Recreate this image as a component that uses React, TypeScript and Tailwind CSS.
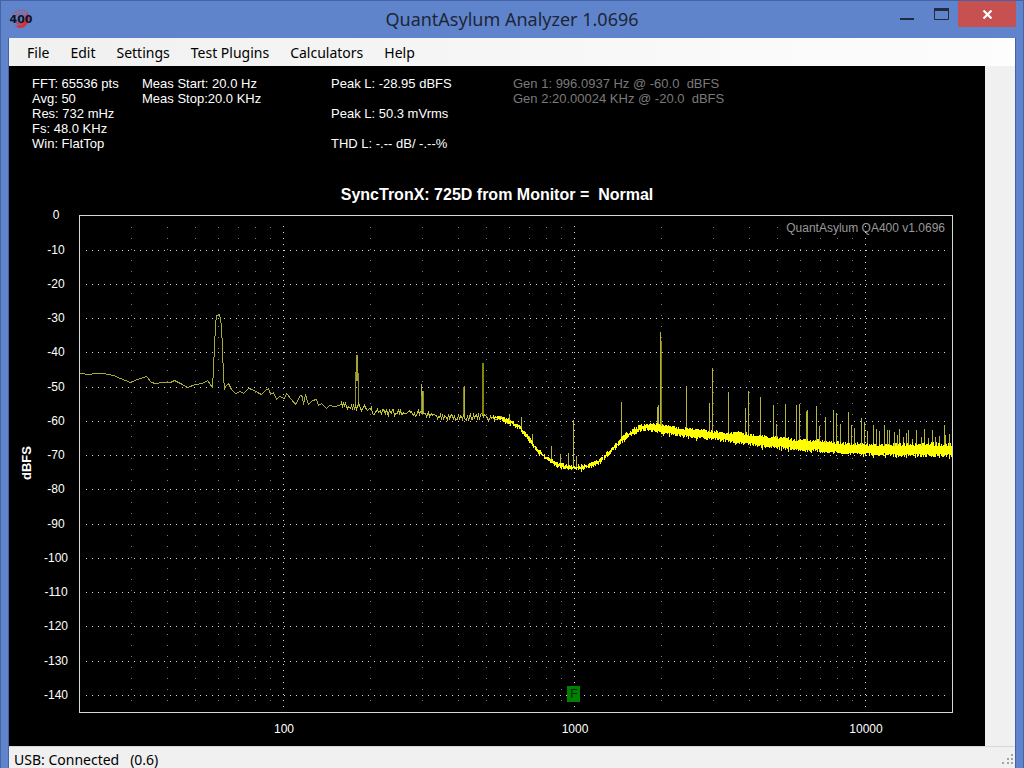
import React from 'react';

const menuItems = ['File', 'Edit', 'Settings', 'Test Plugins', 'Calculators', 'Help'];

// Chart geometry, in view box units
const LEFT = 70;
const RIGHT = 943;
const TOP = 9;
const BOTTOM = 506;
const DECADE = 291;

const levels = [0, -10, -20, -30, -40, -50, -60, -70, -80, -90, -100, -110, -120, -130, -140];
const decades = [100, 1000, 10000];

const freqX = (hz: number) => Math.floor(274.4 + DECADE * Math.log10(hz / 100));
const levelY = (db: number) => Math.floor(9.9 - 3.424 * db);

const minorFreqs: number[] = [];
[10, 100, 1000, 10000].forEach((d) => {
  for (let k = 2; k < 10; k++) {
    const hz = d * k;
    if (hz > 20 && hz < 20000) minorFreqs.push(hz);
  }
});

// Low frequencies: every bin is visible
const lowTrace: [number, number][] = [
  [71, 167], [79, 168], [86, 167], [94, 167], [104, 169], [111, 172], [121, 176], [128, 173],
  [137, 170], [142, 176], [146, 177], [154, 176], [161, 176], [165, 174], [171, 177], [178, 181],
  [186, 178], [193, 177], [198, 174], [203, 181], [204, 162], [206, 119], [207, 109], [210, 108],
  [212, 119], [213, 144], [214, 169], [215, 183], [216, 180], [219, 177], [222, 183], [226, 187],
  [231, 185], [234, 187], [239, 182], [243, 183], [248, 186], [252, 188], [256, 184], [259, 182],
  [261, 188], [264, 186], [267, 193], [270, 190], [275, 192], [277, 187], [282, 193], [286, 198],
  [291, 189], [293, 190], [294, 198], [296, 188], [299, 198], [303, 194], [307, 193], [309, 199],
  [312, 197], [317, 202], [320, 199], [325, 200], [331, 199],
];

// Above that: mean level and spread of the noise floor
const floorPoints: [number, number, number][] = [
  [331, 199, 2], [346, 200, 2], [356, 201, 2], [367, 206, 2], [396, 206, 2], [416, 208, 2],
  [431, 210, 2], [456, 211, 2], [476, 210, 2], [490, 212, 2], [501, 216, 3], [511, 222, 3],
  [519, 232, 3], [528, 245, 3], [538, 253, 3], [546, 258, 3], [556, 261, 3], [567, 262, 3],
  [578, 260, 3], [588, 257, 3], [594, 252, 3], [601, 246, 3], [611, 235, 4], [621, 227, 4],
  [631, 222, 4], [641, 221, 4], [656, 223, 4], [671, 226, 4], [691, 228, 4], [711, 230, 4],
  [731, 232, 5], [751, 235, 5], [771, 237, 5], [791, 239, 5], [811, 240, 5], [831, 242, 5],
  [851, 243, 5], [871, 244, 5], [891, 244, 6], [943, 244, 6],
];

const spikes: [number, number][] = [
  [412, 178], [413, 185], [455, 180], [500, 208], [512, 211], [523, 228], [542, 240], [551, 248],
  [559, 247], [564, 214], [567, 250], [612, 196], [648, 201], [649, 199], [651, 126], [677, 180],
  [700, 197], [703, 162], [719, 186], [736, 202], [739, 185], [751, 191], [764, 199], [767, 218],
  [776, 198], [787, 199], [790, 198], [797, 206], [798, 204], [807, 200], [810, 220], [816, 211],
  [824, 204], [827, 207], [831, 218], [839, 206], [842, 219], [845, 222], [852, 212], [855, 216],
  [858, 225], [864, 219], [867, 223], [870, 225], [875, 219], [878, 224], [880, 224], [885, 226],
  [888, 229], [890, 223], [894, 231], [897, 227], [899, 224], [903, 233], [907, 224], [912, 231],
  [915, 223], [919, 232], [923, 224], [926, 231], [930, 230], [935, 219], [936, 229], [940, 228],
];

// Peaks two pixels wide
const widePeaks: [number, number][] = [[455, 181], [474, 157], [652, 135], [798, 205]];

const floorAt = (x: number) => {
  let i = 1;
  while (i < floorPoints.length - 1 && floorPoints[i][0] < x) i++;
  const [x0, y0, s0] = floorPoints[i - 1];
  const [x1, y1, s1] = floorPoints[i];
  const t = (x - x0) / (x1 - x0);
  return { y: y0 + (y1 - y0) * t, spread: s0 + (s1 - s0) * t };
};

let seed = 400;
const random = () => {
  seed = (seed * 16807) % 2147483647;
  return seed / 2147483647;
};

const buildMidTrace = () => {
  let d = 'M331.5 199.5';
  for (let x = 332; x < 500; x++) {
    const { y, spread } = floorAt(x);
    d += `L${x + 0.5} ${Math.round(y + (random() - 0.5) * spread * 3.4) + 0.5}`;
  }
  return d;
};

const buildNoise = () => {
  let d = '';
  for (let x = 484; x < RIGHT; x++) {
    const { y, spread } = floorAt(x);
    const solid = x < 640 ? 0.1 : 0.65;
    const jitter = x < 640 ? 1 : 0.7;
    const up = spread * (solid + random() * jitter);
    const down = spread * (solid + random() * jitter) + (random() > 0.92 ? 2 : 0);
    d += `M${x + 0.5} ${Math.round(y - up)}V${Math.round(y + down)}`;
  }
  return d;
};

const midTrace = buildMidTrace();
const noise = buildNoise();
const lowPath = 'M' + lowTrace.map(([x, y]) => `${x + 0.5} ${y + 0.5}`).join('L');
const spikePath = spikes.map(([x, y]) => `M${x + 0.5} ${y}V${Math.round(floorAt(x).y)}`).join('');
const widePath = widePeaks.map(([x, y]) => `M${x} ${y}V${Math.round(floorAt(x).y)}`).join('');

const AppIcon: React.FC = () => (
  <svg viewBox="0 0 20 20" className="h-5 w-5 overflow-visible" aria-hidden="true">
    <path d="M2 5C5 1 14 -1 17 5M5 7C7 3 13 3 14 8" fill="none" stroke="#b0596e" strokeWidth="1.5" strokeDasharray="2 1" />
    <path d="M16 4C21 11 15 20 8 19L3 16C10 18 15 14 14 8Z" fill="#d8303a" />
    <path d="M5 12C6 16 12 16 13 11" fill="none" stroke="#c4404f" strokeWidth="1.5" />
    <text x="10" y="14" textAnchor="middle" fontSize="11" fontWeight="bold" fill="#10131f" className="font-['DejaVu_Sans','Liberation_Sans',sans-serif]">
      400
    </text>
  </svg>
);

const TitleBar: React.FC = () => (
  <header className="grid h-[37px] grid-cols-[1fr_auto_1fr] items-start">
    <div className="pt-2 pl-2.5">
      <AppIcon />
    </div>
    <h1 className="pt-1 text-lg leading-7 text-[#1d2638]">QuantAsylum Analyzer 1.0696</h1>
    <div className="flex justify-end pr-[7px]">
      <button aria-label="Minimize" className="flex h-[26px] w-[34px] items-center justify-center">
        <svg viewBox="0 0 14 14" className="h-3.5 w-3.5">
          <path d="M0 12H14" stroke="#222b3d" strokeWidth="2" />
        </svg>
      </button>
      <button aria-label="Maximize" className="flex h-[26px] w-[34px] items-center justify-center">
        <svg viewBox="0 0 15 12" className="h-3 w-[15px]">
          <path d="M0.5 0.5H14.5V11.5H0.5Z" fill="none" stroke="#222b3d" />
          <path d="M0 1.5H15" stroke="#222b3d" strokeWidth="3" />
        </svg>
      </button>
      <button aria-label="Close" className="flex h-[26px] w-[58px] items-center justify-center bg-[#c75050]">
        <svg viewBox="0 0 11 9" className="h-[9px] w-[11px]">
          <path d="M1.5 0.5L9.5 8.5M9.5 0.5L1.5 8.5" stroke="#fff" strokeWidth="2.2" />
        </svg>
      </button>
    </div>
  </header>
);

const Readouts: React.FC = () => (
  <section className="grid grid-cols-[110px_189px_182px_1fr] pt-2.5 pl-[23px] text-[13px] leading-[15px] whitespace-pre">
    <div>
      <p>FFT: 65536 pts</p>
      <p>Avg: 50</p>
      <p>Res: 732 mHz</p>
      <p>Fs: 48.0 KHz</p>
      <p>Win: FlatTop</p>
    </div>
    <div>
      <p>Meas Start: 20.0 Hz</p>
      <p>Meas Stop:20.0 KHz</p>
    </div>
    <div className="flex flex-col gap-[15px]">
      <p>Peak L: -28.95 dBFS</p>
      <p>Peak L: 50.3 mVrms</p>
      <p>THD L: -.-- dB/ -.--%</p>
    </div>
    <div className="text-[#7a7a7a]">
      <p>{'Gen 1: 996.0937 Hz @ -60.0  dBFS'}</p>
      <p>{'Gen 2:20.00024 KHz @ -20.0  dBFS'}</p>
    </div>
  </section>
);

const Spectrum: React.FC = () => (
  <svg viewBox="0 0 976 540" className="block h-auto w-full" role="img" aria-label="Spectrum">
    <g fill="none" shapeRendering="crispEdges">
      <g stroke="#7d7d7d" strokeDasharray="1 10">
        {minorFreqs.map((hz) => (
          <path key={hz} d={`M${freqX(hz) + 0.5} 21V495`} />
        ))}
      </g>
      <g stroke="#d8d8d8" strokeDasharray="1 5">
        {decades.map((hz) => (
          <path key={hz} d={`M${freqX(hz) + 0.5} 20V501`} />
        ))}
        {levels.slice(1).map((db) => (
          <path key={db} d={`M77 ${levelY(db) + 0.5}H936`} />
        ))}
      </g>
      <path d={widePath} stroke="#85850c" strokeWidth="2" />
      <path d={spikePath} stroke="#b4b43a" />
      <path d="M346.5 200V166M349.5 200V167M412.5 207V190M414.5 208V185" stroke="#8f8f35" />
      <path d="M348 149V175" stroke="#a5a52a" strokeWidth="2" />
      <path d={lowPath} stroke="#a9a938" />
      <path d={midTrace} stroke="#c2c22e" />
      <path d={noise} stroke="#ffff00" />
      <rect x={LEFT + 0.5} y={TOP + 0.5} width={RIGHT - LEFT} height={BOTTOM - TOP} stroke="#d5d9d5" />
      <rect x="558" y="480" width="13" height="16" fill="#008000" />
    </g>
    <g fontSize="12" fill="#fff" textAnchor="middle">
      {levels.map((db) => (
        <text key={db} x="47" y={levelY(db) + 4}>
          {db}
        </text>
      ))}
      {decades.map((hz) => (
        <text key={hz} x={freqX(hz) + 1} y="527">
          {hz}
        </text>
      ))}
      <text x="565" y="492" fill="#002800">
        F
      </text>
      <text x="22" y="257" fontSize="13" fontWeight="bold" transform="rotate(-90 22 257)">
        dBFS
      </text>
    </g>
    <text x="936" y="26" fontSize="12" fill="#989898" textAnchor="end">
      QuantAsylum QA400 v1.0696
    </text>
  </svg>
);

const App: React.FC = () => {
  return (
    <div className="flex min-h-screen flex-col border-x border-t border-[#4463a6] bg-[#5f84cc] font-['Noto_Sans','Open_Sans',sans-serif] text-black">
      <TitleBar />
      <div className="mx-[7px] flex flex-1 flex-col border-x border-[#4463a6] bg-[#f0f0f0]">
        <nav className="flex h-7 items-center gap-[21px] bg-gradient-to-r from-[#f0f0f0] to-[#fdfdfd] pt-0.5 pl-[18px] text-sm">
          {menuItems.map((item) => (
            <button key={item}>{item}</button>
          ))}
        </nav>
        <main className="mr-[30px] bg-black font-['Liberation_Sans',Arial,sans-serif] text-white">
          <Readouts />
          <h2 className="mt-[33px] text-center text-base leading-[22px] font-bold whitespace-pre">
            {'SyncTronX: 725D from Monitor =  Normal'}
          </h2>
          <Spectrum />
        </main>
        <footer className="flex h-[22px] items-center justify-between border-t border-[#d7d7d7] pt-1 pl-[5px] text-sm whitespace-pre">
          <span>{'USB: Connected   (0.6)'}</span>
          <svg viewBox="0 0 11 11" className="mr-0.5 h-[11px] w-[11px]" fill="#a3a3a3" aria-hidden="true">
            <path d="M9 0h2v2h-2zM5 4h2v2h-2zM9 4h2v2h-2zM0 8h2v2h-2zM5 8h2v2h-2zM9 8h2v2h-2z" />
          </svg>
        </footer>
      </div>
    </div>
  );
};

export default App;
